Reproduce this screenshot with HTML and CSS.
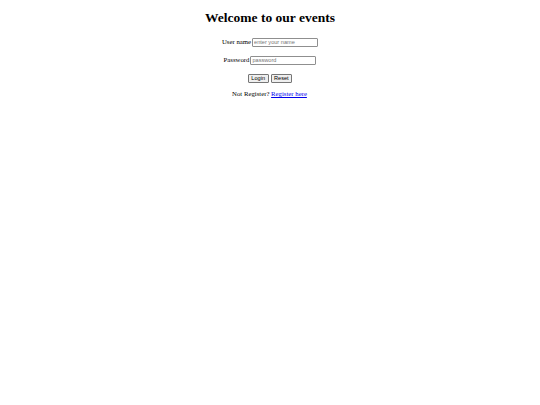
FILE: index.html
```html
<!DOCTYPE html>
<html>
<head>
<meta charset="utf-8">
<link rel="stylesheet" href="styles.css">
</head>
<body>
<div class="page">
  <h1 class="title">Welcome to our events</h1>
  <form class="form">
    <div class="row"><label class="label">User name</label><input class="field" type="text" placeholder="enter your name"></div>
    <div class="row"><label class="label">Password</label><input class="field" type="password" placeholder="password"></div>
    <div class="row buttons"><button class="btn" type="button">Login</button><button class="btn" type="reset">Reset</button></div>
    <div class="row"><span class="label">Not Register? <a class="link" href="#">Register here</a></span></div>
  </form>
</div>
</body>
</html>
```
FILE: styles.css
```css
html, body {
  margin: 0;
  padding: 0;
  background: #fff;
}
.page {
  font-family: "Liberation Serif", serif;
  color: #000;
  text-align: center;
  padding-top: 9px;
}
.title {
  margin: 0;
  font-size: 13.5px;
  line-height: 18px;
  font-weight: bold;
}
.form {
  display: flex;
  flex-direction: column;
  align-items: center;
  margin-top: 10px;
}
.row {
  display: flex;
  align-items: center;
  justify-content: center;
  height: 10px;
  margin-bottom: 8px;
}
.buttons {
  gap: 2px;
  margin-bottom: 6px;
}
.label {
  font-size: 6.75px;
  line-height: 10px;
  margin-right: 1px;
}
.field {
  box-sizing: border-box;
  width: 66px;
  height: 9px;
  margin: 0;
  padding: 0 1px;
  border: 1px solid #8f8f8f;
  border-radius: 1px;
  font-family: "Liberation Sans", sans-serif;
  font-size: 5.6px;
  outline: none;
}
.field::placeholder {
  color: #757575;
}
.btn {
  box-sizing: border-box;
  height: 9px;
  margin: 0;
  padding: 0 2.5px;
  border: 1px solid #767676;
  border-radius: 1px;
  background: #efefef;
  font-family: "Liberation Sans", sans-serif;
  font-size: 5.6px;
  line-height: 7px;
  color: #000;
}
.link {
  color: #0000ee;
  text-decoration: underline;
}
```
